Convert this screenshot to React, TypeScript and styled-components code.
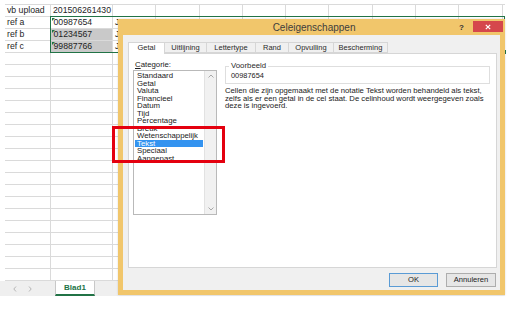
import styled, { createGlobalStyle } from 'styled-components';

const GlobalStyle = createGlobalStyle`
  body {
    margin: 0;
    background: #ffffff;
  }
`;

const sheetRows: string[][] = [
  ['vb upload', '201506261430', ''],
  ['ref a', '00987654', 'J'],
  ['ref b', '01234567', 'J'],
  ['ref c', '99887766', 'J'],
];
const ROW_COUNT = 23;
const EXTRA_COLS = 8;

const categories = [
  'Standaard',
  'Getal',
  'Valuta',
  'Financieel',
  'Datum',
  'Tijd',
  'Percentage',
  'Breuk',
  'Wetenschappelijk',
  'Tekst',
  'Speciaal',
  'Aangepast',
];

const tabs = [
  { label: 'Getal', width: 37 },
  { label: 'Uitlijning', width: 43 },
  { label: 'Lettertype', width: 50 },
  { label: 'Rand', width: 34 },
  { label: 'Opvulling', width: 46 },
  { label: 'Bescherming', width: 55 },
];

const App = () => {
  return (
    <Screen>
      <GlobalStyle />
      <Workbook>
        <Sheet>
          {Array.from({ length: ROW_COUNT }).map((_, r) => {
            const row = sheetRows[r] || [];
            return Array.from({ length: 3 + EXTRA_COLS }).map((__, c) => (
              <Cell
                key={`${r}-${c}`}
                $shade={c === 1 && (r === 2 || r === 3)}
                $marker={c === 1 && r >= 1 && r <= 3}>
                {row[c] || ''}
              </Cell>
            ));
          })}
          <Selection />
        </Sheet>
        <SheetTabs>
          <NavArrow>
            <svg width="4" height="6" viewBox="0 0 4 6">
              <path d="M3 0.5 L0.8 3 L3 5.5" fill="none" stroke="#b5b5b5" strokeWidth="1" />
            </svg>
          </NavArrow>
          <NavArrow>
            <svg width="4" height="6" viewBox="0 0 4 6">
              <path d="M1 0.5 L3.2 3 L1 5.5" fill="none" stroke="#b5b5b5" strokeWidth="1" />
            </svg>
          </NavArrow>
          <SheetTab>Blad1</SheetTab>
        </SheetTabs>
      </Workbook>

      <Dialog>
        <TitleBar>
          <Title>Celeigenschappen</Title>
          <HelpMark>?</HelpMark>
          <CloseButton>
            <svg width="6" height="6" viewBox="0 0 6 6">
              <path d="M0.8 0.8 L5.2 5.2 M5.2 0.8 L0.8 5.2" stroke="#ffffff" strokeWidth="1.2" />
            </svg>
          </CloseButton>
        </TitleBar>
        <DialogBody>
          <TabStrip>
            {tabs.map((t, i) => (
              <Tab key={t.label} $active={i === 0} $width={t.width}>
                {t.label}
              </Tab>
            ))}
          </TabStrip>
          <Panel>
            <CategoryColumn>
              <FieldLabel>
                <u>C</u>ategorie:
              </FieldLabel>
              <ListBox>
                <ListItems>
                  {categories.map((c) => (
                    <ListItem key={c} $selected={c === 'Tekst'}>
                      {c}
                    </ListItem>
                  ))}
                </ListItems>
                <ScrollBar>
                  <svg width="6" height="4" viewBox="0 0 6 4">
                    <path d="M0.5 3.5 L3 1 L5.5 3.5" fill="none" stroke="#a8a8a8" strokeWidth="1" />
                  </svg>
                  <svg width="6" height="4" viewBox="0 0 6 4">
                    <path d="M0.5 0.5 L3 3 L5.5 0.5" fill="none" stroke="#a8a8a8" strokeWidth="1" />
                  </svg>
                </ScrollBar>
              </ListBox>
            </CategoryColumn>
            <DetailColumn>
              <SampleGroup>
                <legend>Voorbeeld</legend>
                <SampleValue>00987654</SampleValue>
              </SampleGroup>
              <Description>
                Cellen die zijn opgemaakt met de notatie Tekst worden behandeld als tekst,
                zelfs als er een getal in de cel staat. De celinhoud wordt weergegeven zoals
                deze is ingevoerd.
              </Description>
            </DetailColumn>
          </Panel>
          <Footer>
            <DialogButton $default>OK</DialogButton>
            <DialogButton>Annuleren</DialogButton>
          </Footer>
        </DialogBody>
      </Dialog>

      <Highlight />
    </Screen>
  );
};

const Screen = styled.div`
  position: relative;
  width: 517px;
  height: 323px;
  overflow: hidden;
  background: #ffffff;
  font-family: 'Liberation Sans', Arial, sans-serif;
`;

const Workbook = styled.div`
  width: 505px;
  display: flex;
  flex-direction: column;
`;

const Sheet = styled.div`
  position: relative;
  display: grid;
  grid-template-columns: 46px 62px repeat(${EXTRA_COLS + 1}, 43.3px);
  grid-template-rows: repeat(${ROW_COUNT}, 12px);
  margin: 4px 0 0 5px;
  border-top: 1px solid #dadada;
`;

const Cell = styled.div<{ $shade?: boolean; $marker?: boolean }>`
  position: relative;
  box-sizing: border-box;
  border-right: 1px solid #dadada;
  border-bottom: 1px solid #dadada;
  background: ${(p) => (p.$shade ? '#c9c9c9' : 'transparent')};
  font-size: 8.7px;
  line-height: 11px;
  color: #1e1e1e;
  padding-left: ${(p) => (p.$marker ? '2.5px' : '2px')};
  white-space: nowrap;

  &::before {
    display: ${(p) => (p.$marker ? 'block' : 'none')};
    content: '';
    position: absolute;
    left: 1px;
    top: 1px;
    border-top: 3px solid #217346;
    border-right: 3px solid transparent;
  }
`;

const Selection = styled.div`
  grid-column: 2;
  grid-row: 2 / span 3;
  position: absolute;
  inset: -1px 0 0 -1px;
  border: 1.5px solid #217346;
  pointer-events: none;

  &::after {
    content: '';
    position: absolute;
    right: -3px;
    bottom: -3px;
    width: 4px;
    height: 4px;
    background: #217346;
    border: 1px solid #ffffff;
  }
`;

const SheetTabs = styled.div`
  display: flex;
  align-items: stretch;
  height: 15px;
  background: #efefef;
  padding-left: 5px;
`;

const NavArrow = styled.div`
  width: 20px;
  display: flex;
  align-items: center;
  justify-content: center;
  margin-left: -5px;
  &:first-child {
    margin-left: 0;
  }
`;

const SheetTab = styled.div`
  margin-left: 15px;
  width: 40px;
  background: #ffffff;
  border-left: 1px solid #c8c8c8;
  border-right: 1px solid #c8c8c8;
  border-bottom: 2px solid #217346;
  box-sizing: border-box;
  display: flex;
  align-items: center;
  justify-content: center;
  font-size: 8px;
  font-weight: bold;
  color: #217346;
`;

const Dialog = styled.div`
  position: absolute;
  left: 118px;
  top: 19px;
  width: 387px;
  height: 276px;
  box-sizing: border-box;
  border: 5px solid #f1c66b;
  border-top: none;
  display: flex;
  flex-direction: column;
  background: #f0f0f0;
  box-shadow: 0 0 2px rgba(0, 0, 0, 0.15);
`;

const TitleBar = styled.div`
  height: 16px;
  background: #f1c66b;
  display: flex;
  align-items: center;
  position: relative;
`;

const Title = styled.div`
  flex: 1;
  text-align: center;
  font-size: 10px;
  color: #3d3d3d;
  padding-left: 46px;
`;

const HelpMark = styled.div`
  font-size: 8px;
  font-weight: bold;
  color: #333333;
  margin-right: 9px;
`;

const CloseButton = styled.div`
  width: 30px;
  height: 11px;
  margin-top: 2px;
  align-self: flex-start;
  background: #d5474c;
  display: flex;
  align-items: center;
  justify-content: center;
  margin-right: -3px;
`;

const DialogBody = styled.div`
  flex: 1;
  display: flex;
  flex-direction: column;
  padding: 7px 3px 3px 5px;
`;

const TabStrip = styled.div`
  display: flex;
  height: 11px;
  position: relative;
  z-index: 1;
`;

const Tab = styled.div<{ $active?: boolean; $width: number }>`
  flex: 0 0 ${(p) => p.$width}px;
  box-sizing: border-box;
  height: ${(p) => (p.$active ? '12px' : '11px')};
  border: 1px solid #d6d6d6;
  border-bottom: ${(p) => (p.$active ? 'none' : '1px solid #d6d6d6')};
  margin-left: -1px;
  background: ${(p) => (p.$active ? '#ffffff' : '#f0f0f0')};
  font-size: 7.5px;
  line-height: 9px;
  text-align: center;
  color: #2a2a2a;
  white-space: nowrap;
  overflow: hidden;
  &:first-child {
    margin-left: 0;
  }
`;

const Panel = styled.div`
  height: 215px;
  box-sizing: border-box;
  background: #ffffff;
  border: 1px solid #d6d6d6;
  display: flex;
  gap: 8px;
  padding: 6px 6px 0 4px;
`;

const CategoryColumn = styled.div`
  width: 84px;
  display: flex;
  flex-direction: column;
`;

const FieldLabel = styled.div`
  font-size: 7.8px;
  line-height: 9px;
  color: #222222;
  padding-left: 2px;
  margin-bottom: 1px;
`;

const ListBox = styled.div`
  height: 145px;
  box-sizing: border-box;
  border: 1px solid #b9b9b9;
  display: flex;
`;

const ListItems = styled.div`
  flex: 1;
  padding: 1px 1px 0 1px;
`;

const ListItem = styled.div<{ $selected?: boolean }>`
  font-size: 7.8px;
  line-height: 7.5px;
  height: 7.5px;
  padding-left: 2px;
  color: ${(p) => (p.$selected ? '#ffffff' : '#1a1a1a')};
  background: ${(p) => (p.$selected ? '#3393f0' : 'transparent')};
  white-space: nowrap;
`;

const ScrollBar = styled.div`
  width: 11px;
  background: #f1f1f1;
  border-left: 1px solid #e2e2e2;
  display: flex;
  flex-direction: column;
  justify-content: space-between;
  align-items: center;
  padding: 3px 0;
`;

const DetailColumn = styled.div`
  flex: 1;
  display: flex;
  flex-direction: column;
  padding-top: 2px;
`;

const SampleGroup = styled.fieldset`
  margin: 0;
  padding: 1px 5px 2px;
  border: 1px solid #dedede;

  legend {
    font-size: 7.8px;
    line-height: 8px;
    padding: 0 2px;
    margin-left: -2px;
    color: #2a2a2a;
  }
`;

const SampleValue = styled.div`
  font-size: 7.4px;
  line-height: 10px;
  color: #222222;
`;

const Description = styled.div`
  margin-top: 3px;
  font-size: 7.7px;
  line-height: 7.6px;
  color: #1a1a1a;
`;

const Footer = styled.div`
  display: flex;
  justify-content: flex-end;
  gap: 8px;
  padding: 5px 1px 0 0;
`;

const DialogButton = styled.div<{ $default?: boolean }>`
  width: ${(p) => (p.$default ? '49px' : '50px')};
  height: 14px;
  box-sizing: border-box;
  border: 1px solid ${(p) => (p.$default ? '#5a9bd5' : '#adadad')};
  background: #e6e6e6;
  font-size: 7.6px;
  line-height: 12px;
  text-align: center;
  color: #222222;
`;

const Highlight = styled.div`
  position: absolute;
  left: 112px;
  top: 126px;
  width: 113px;
  height: 37px;
  box-sizing: border-box;
  border: 3px solid #e4000f;
`;

export default App;
